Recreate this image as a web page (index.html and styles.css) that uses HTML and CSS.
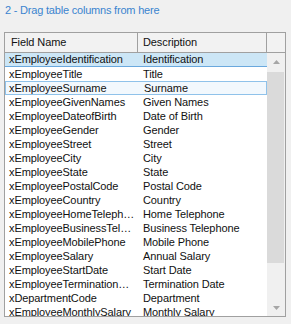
FILE: index.html
```html
<!DOCTYPE html>
<html lang="en">
<head>
  <meta charset="UTF-8">
  <title>Field Chooser</title>
  <link rel="stylesheet" href="styles.css">
</head>
<body>
  <div class="caption">2 - Drag table columns from here</div>

  <div class="grid">
    <div class="grid-head">
      <div class="hcell col-name">Field Name</div>
      <div class="hcell col-desc">Description</div>
      <div class="hcell col-corner"></div>
    </div>
    <div class="grid-body">
      <div class="rows">
        <div class="row selected"><div class="cell col-name">xEmployeeIdentification</div><div class="cell col-desc">Identification</div></div>
        <div class="row"><div class="cell col-name">xEmployeeTitle</div><div class="cell col-desc">Title</div></div>
        <div class="row focused"><div class="cell col-name">xEmployeeSurname</div><div class="cell col-desc">Surname</div></div>
        <div class="row"><div class="cell col-name">xEmployeeGivenNames</div><div class="cell col-desc">Given Names</div></div>
        <div class="row"><div class="cell col-name">xEmployeeDateofBirth</div><div class="cell col-desc">Date of Birth</div></div>
        <div class="row"><div class="cell col-name">xEmployeeGender</div><div class="cell col-desc">Gender</div></div>
        <div class="row"><div class="cell col-name">xEmployeeStreet</div><div class="cell col-desc">Street</div></div>
        <div class="row"><div class="cell col-name">xEmployeeCity</div><div class="cell col-desc">City</div></div>
        <div class="row"><div class="cell col-name">xEmployeeState</div><div class="cell col-desc">State</div></div>
        <div class="row"><div class="cell col-name">xEmployeePostalCode</div><div class="cell col-desc">Postal Code</div></div>
        <div class="row"><div class="cell col-name">xEmployeeCountry</div><div class="cell col-desc">Country</div></div>
        <div class="row"><div class="cell col-name">xEmployeeHomeTelephone</div><div class="cell col-desc">Home Telephone</div></div>
        <div class="row"><div class="cell col-name">xEmployeeBusinessTelephone</div><div class="cell col-desc">Business Telephone</div></div>
        <div class="row"><div class="cell col-name">xEmployeeMobilePhone</div><div class="cell col-desc">Mobile Phone</div></div>
        <div class="row"><div class="cell col-name">xEmployeeSalary</div><div class="cell col-desc">Annual Salary</div></div>
        <div class="row"><div class="cell col-name">xEmployeeStartDate</div><div class="cell col-desc">Start Date</div></div>
        <div class="row"><div class="cell col-name">xEmployeeTerminationDate</div><div class="cell col-desc">Termination Date</div></div>
        <div class="row"><div class="cell col-name">xDepartmentCode</div><div class="cell col-desc">Department</div></div>
        <div class="row"><div class="cell col-name">xEmployeeMonthlySalary</div><div class="cell col-desc">Monthly Salary</div></div>
      </div>
      <div class="vscroll">
        <div class="arrow">
          <svg width="7" height="4" viewBox="0 0 7 4"><polygon points="0,4 7,4 3.5,0" fill="#a6a6a6"/></svg>
        </div>
        <div class="thumb-track"><div class="thumb"></div></div>
        <div class="arrow">
          <svg width="7" height="4" viewBox="0 0 7 4"><polygon points="0,0 7,0 3.5,4" fill="#a6a6a6"/></svg>
        </div>
      </div>
    </div>
  </div>
</body>
</html>
```

FILE: styles.css
```css
* {
  box-sizing: border-box;
}

body {
  margin: 0;
  padding: 3px 4px;
  background-color: #f0f0f0;
  font-family: 'Liberation Sans', Arial, sans-serif;
  font-size: 11px;
  letter-spacing: -0.1px;
  color: #111;
}

.caption {
  height: 14px;
  line-height: 14px;
  padding-left: 1px;
  letter-spacing: -0.2px;
  color: #3a84cf;
}

.grid {
  margin-top: 15px;
  width: 282px;
  height: 285px;
  border: 1px solid #a0a0a0;
  background-color: #fff;
  display: flex;
  flex-direction: column;
  overflow: hidden;
}

.grid-head {
  display: flex;
  height: 20px;
  flex-shrink: 0;
  background-color: #f2f2f2;
  border-bottom: 1px solid #a0a0a0;
}

.hcell {
  line-height: 19px;
  border-right: 1px solid #a0a0a0;
  white-space: nowrap;
}

.hcell.col-name {
  width: 133px;
  padding-left: 6px;
}

.hcell.col-desc {
  width: 129px;
  padding-left: 5px;
}

.hcell.col-corner {
  flex: 1;
  border-right: none;
}

.grid-body {
  display: flex;
  flex: 1;
  min-height: 0;
}

.rows {
  width: 262px;
  overflow: hidden;
}

.row {
  display: flex;
  height: 14px;
  line-height: 14px;
}

.row.selected {
  background-color: #cce6f6;
  border-bottom: 1px solid #6aa8dd;
  line-height: 13px;
}

.row.focused {
  background-color: #f2f8fd;
  border: 1px solid #8fc2ea;
  line-height: 12px;
}

.cell {
  white-space: nowrap;
  overflow: hidden;
  text-overflow: ellipsis;
}

.cell.col-name {
  width: 133px;
  padding: 0 2px 0 4px;
}

.cell.col-desc {
  flex: 1;
  padding-left: 5px;
}

.row.focused .cell.col-name {
  padding-left: 3px;
}

.row.focused .cell.col-desc {
  padding-left: 5px;
}

.vscroll {
  flex: 1;
  display: flex;
  flex-direction: column;
  background-color: #f0f0f0;
}

.arrow {
  height: 17px;
  display: flex;
  align-items: center;
  justify-content: center;
}

.thumb-track {
  flex: 1;
  padding: 2px 1px 36px 0;
}

.thumb {
  height: 100%;
  background-color: #dadada;
}
```
